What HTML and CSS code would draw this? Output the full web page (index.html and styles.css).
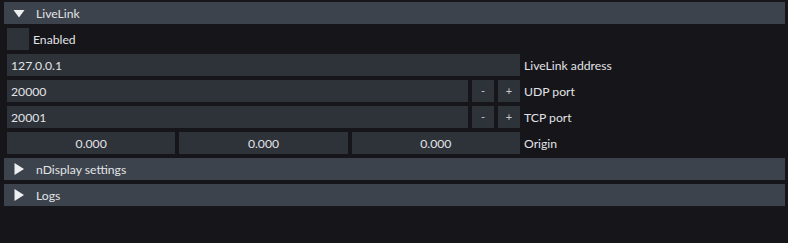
FILE: index.html
```html
<!DOCTYPE html>
<html>
<head>
<meta charset="utf-8">
<link rel="stylesheet" href="styles.css">
</head>
<body>
<div class="panel">
  <div class="header">
    <svg class="arrow" width="24" height="22" viewBox="0 0 24 22"><polygon points="1.5,8 12.5,8 7,15.5" fill="#eeeff1"/></svg>
    <span>LiveLink</span>
  </div>
  <div class="section">
    <div class="row">
      <div class="checkbox"></div>
      <span class="label">Enabled</span>
    </div>
    <div class="row">
      <div class="field wide">127.0.0.1</div>
      <span class="label">LiveLink address</span>
    </div>
    <div class="row">
      <div class="field grow">20000</div>
      <div class="btn">-</div>
      <div class="btn">+</div>
      <span class="label">UDP port</span>
    </div>
    <div class="row">
      <div class="field grow">20001</div>
      <div class="btn">-</div>
      <div class="btn">+</div>
      <span class="label">TCP port</span>
    </div>
    <div class="row">
      <div class="triple">
        <div class="field center">0.000</div>
        <div class="field center">0.000</div>
        <div class="field center">0.000</div>
      </div>
      <span class="label">Origin</span>
    </div>
  </div>
  <div class="header">
    <svg class="arrow" width="24" height="22" viewBox="0 0 24 22"><polygon points="2.5,5 12,11 2.5,17" fill="#eeeff1"/></svg>
    <span>nDisplay settings</span>
  </div>
  <div class="header">
    <svg class="arrow" width="24" height="22" viewBox="0 0 24 22"><polygon points="2.5,5 12,11 2.5,17" fill="#eeeff1"/></svg>
    <span>Logs</span>
  </div>
</div>
</body>
</html>
```

FILE: styles.css
```css
html, body {
  margin: 0;
  padding: 0;
  background: #15151a;
  width: 788px;
  height: 243px;
  overflow: hidden;
}
body {
  font-family: "Lato", "Open Sans", sans-serif;
  font-size: 12.2px;
  color: #e2e3e6;
}
.panel {
  padding: 2px 3px 0 4px;
  display: flex;
  flex-direction: column;
  gap: 4px;
}
.header {
  height: 22px;
  background: #3c434c;
  display: flex;
  align-items: center;
}
.header .arrow {
  margin-left: 8px;
  display: block;
  flex: none;
}
.header span {
  line-height: 21px;
  padding-top: 1px;
}
.section {
  padding-left: 3px;
  display: flex;
  flex-direction: column;
  gap: 4px;
}
.row {
  display: flex;
  align-items: center;
  gap: 4px;
  height: 22px;
}
.checkbox {
  width: 22px;
  height: 22px;
  background: #2e3239;
}
.field {
  height: 22px;
  line-height: 21px;
  padding-top: 1px;
  background: #2e3239;
  padding-left: 4px;
  box-sizing: border-box;
}
.wide {
  width: 513px;
}
.grow {
  width: 461px;
}
.btn {
  width: 22px;
  height: 22px;
  line-height: 22px;
  background: #2e3239;
  text-align: center;
  font-size: 11px;
  color: #c9cacd;
}
.triple {
  width: 513px;
  display: flex;
  gap: 4px;
}
.triple .field {
  flex: 1;
  padding-left: 0;
  text-align: center;
}
.label {
  line-height: 21px;
  padding-top: 1px;
}
```
